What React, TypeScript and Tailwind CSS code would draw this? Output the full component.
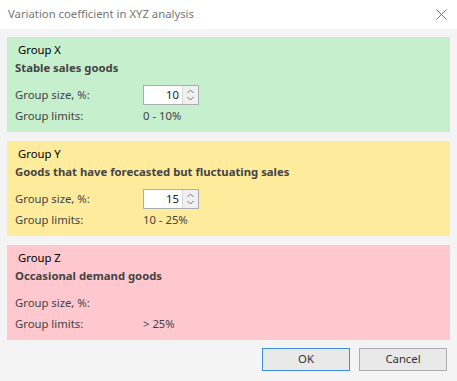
function Spinner({ value }: { value: string }) {
  return (
    <div className="flex h-[20px] w-[56px] border border-[#abadb3] bg-white">
      <div className="flex flex-1 items-center justify-end pr-[3px] text-[#222]">{value}</div>
      <div className="flex w-[16px] flex-col items-center justify-center border-l border-[#d9d9d9] bg-[#f0f0f0]">
        <svg width="7" height="5" viewBox="0 0 7 5" className="mb-[2px]">
          <path d="M0.5 4 L3.5 1 L6.5 4" fill="none" stroke="#777" strokeWidth="1" />
        </svg>
        <svg width="7" height="5" viewBox="0 0 7 5">
          <path d="M0.5 1 L3.5 4 L6.5 1" fill="none" stroke="#777" strokeWidth="1" />
        </svg>
      </div>
    </div>
  );
}

type Group = {
  name: string;
  title: string;
  size?: string;
  limits: string;
  bg: string;
};

function GroupPanel({ g }: { g: Group }) {
  return (
    <div className={`h-[95px] pl-[8px] pt-[4px] ${g.bg}`}>
      <div className="h-[17px] pl-[3px] leading-[17px] text-black">{g.name}</div>
      <div className="mt-[1px] h-[18px] font-bold leading-[18px] text-[#444]">{g.title}</div>
      <div className="mt-[8px] flex h-[20px] items-center text-[#444]">
        <div className="w-[128px]">Group size, %:</div>
        {g.size && <Spinner value={g.size} />}
      </div>
      <div className="mt-[1px] flex h-[20px] items-center text-[#444]">
        <div className="w-[128px]">Group limits:</div>
        <div>{g.limits}</div>
      </div>
    </div>
  );
}

const groups: Group[] = [
  { name: "Group X", title: "Stable sales goods", size: "10", limits: "0 - 10%", bg: "bg-[#c6efce]" },
  { name: "Group Y", title: "Goods that have forecasted but fluctuating sales", size: "15", limits: "10 - 25%", bg: "bg-[#ffeb9c]" },
  { name: "Group Z", title: "Occasional demand goods", limits: "> 25%", bg: "bg-[#ffc7ce]" },
];

export default function App() {
  return (
    <div className="flex h-[381px] w-[457px] flex-col bg-[#f4f4f4] font-['Noto_Sans',sans-serif] text-[11.3px]">
      <div className="flex h-[29px] items-center justify-between bg-white pl-[8px] pr-[10px]">
        <span className="text-[#777]">Variation coefficient in XYZ analysis</span>
        <svg width="11" height="11" viewBox="0 0 11 11">
          <path d="M0.5 0.5 L10.5 10.5 M10.5 0.5 L0.5 10.5" stroke="#777" strokeWidth="1" />
        </svg>
      </div>
      <div className="flex flex-col px-[7px] pt-[8px]">
        <GroupPanel g={groups[0]} />
        <div className="h-[9px]" />
        <GroupPanel g={groups[1]} />
        <div className="h-[9px]" />
        <GroupPanel g={groups[2]} />
      </div>
      <div className="flex justify-end gap-[9px] px-[10px] pt-[8px]">
        <button className="h-[23px] w-[88px] border border-[#3c8ee8] bg-[#e9e9e9] text-[#333]">OK</button>
        <button className="h-[23px] w-[88px] border border-[#adadad] bg-[#e9e9e9] text-[#333]">Cancel</button>
      </div>
    </div>
  );
}
